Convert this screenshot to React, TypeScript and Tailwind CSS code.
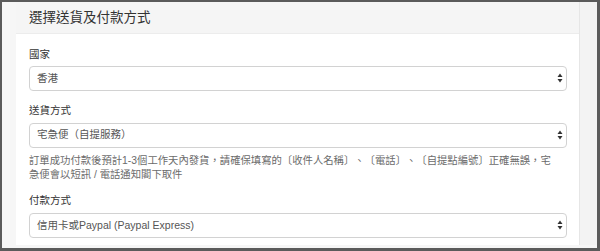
import React from "react";

const FONT = '"Liberation Sans", "Noto Sans CJK TC", sans-serif';

function Arrows() {
  return (
    <svg
      className="pointer-events-none absolute right-[4px] top-1/2 -translate-y-1/2"
      width="6"
      height="10"
      viewBox="0 0 6 10"
    >
      <path d="M3 0.5 L5.5 4 L0.5 4 Z" fill="#333" />
      <path d="M3 9.5 L5.5 6 L0.5 6 Z" fill="#333" />
    </svg>
  );
}

function SelectBox({ value }: { value: string }) {
  return (
    <div className="relative">
      <select
        defaultValue={value}
        className="h-[25px] w-full appearance-none rounded-[4px] border border-[#d2d2d2] bg-white pl-[7px] pr-5 text-[10.5px] text-[#555] outline-none [text-spacing-trim:space-all]"
        style={{ fontFamily: FONT }}
      >
        <option value={value}>{value}</option>
      </select>
      <Arrows />
    </div>
  );
}

function Label({ text, className }: { text: string; className: string }) {
  return (
    <div className={"h-[14px] overflow-visible text-[10.5px] leading-[14px] text-[#333] " + className}>
      {text}
    </div>
  );
}

export default function App() {
  return (
    <div
      className="h-[251px] w-[600px] bg-[#5b5b5b] pt-[2px] pl-[2px] pr-[3px] pb-[3px] [text-spacing-trim:space-all]"
      style={{ fontFamily: FONT }}
    >
      <div className="flex h-full flex-col bg-[#f6f6f6]">
        <div className="flex flex-1">
          <div className="w-[14px] shrink-0" />
          <div className="flex w-[563px] shrink-0 flex-col bg-white">
            <div className="flex h-[32px] items-center border-b border-[#ececec] bg-[#f5f5f5] pl-[13px]">
              <h2 className="text-[13.5px] leading-none text-[#333]">選擇送貨及付款方式</h2>
            </div>
            <div className="flex-1 px-[12px] pl-[13px] pt-[13px]">
              <Label text="國家" className="" />
              <div className="mt-[4px]">
                <SelectBox value="香港" />
              </div>

              <Label text="送貨方式" className="mt-[12px]" />
              <div className="mt-[4px]">
                <SelectBox value="宅急便（自提服務）" />
              </div>
              <p className="mt-[6px] h-[28px] text-[10.35px] leading-[14px] text-[#6b6b6b]">
                訂單成功付款後預計1-3個工作天內發貨，請確保填寫的〔收件人名稱〕、〔電話〕、〔自提點編號〕正確無誤，宅
                <br />
                急便會以短訊 / 電話通知閣下取件
              </p>

              <Label text="付款方式" className="mt-[11px]" />
              <div className="mt-[5px]">
                <SelectBox value="信用卡或Paypal (Paypal Express)" />
              </div>
            </div>
          </div>
          <div className="flex-1 border-l border-[#e6e6e6] bg-[#f3f3f3]" />
        </div>
        <div className="h-[3px]" />
      </div>
    </div>
  );
}
